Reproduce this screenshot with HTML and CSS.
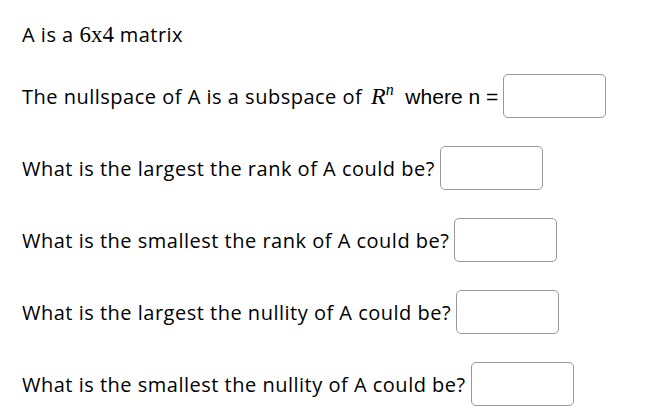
FILE: index.html
```html
<!DOCTYPE html>
<html>
<head>
<meta charset="utf-8">
<link rel="stylesheet" href="styles.css">
</head>
<body>
<div class="page">
  <div class="row first">A is a <span class="math">6x4</span> matrix</div>
  <div class="row"><span>The nullspace of A is a subspace of <span class="mvar">R<sup>n</sup></span> <span class="alt">where n =</span></span><span class="box"></span></div>
  <div class="row"><span>What is the largest the rank of A could be?</span><span class="box"></span></div>
  <div class="row"><span>What is the smallest the rank of A could be?</span><span class="box"></span></div>
  <div class="row"><span>What is the largest the nullity of A could be?</span><span class="box"></span></div>
  <div class="row"><span>What is the smallest the nullity of A could be?</span><span class="box"></span></div>
</div>
</body>
</html>
```
FILE: styles.css
```css
html, body {
  margin: 0;
  background: #fff;
}
.page {
  display: flex;
  flex-direction: column;
  gap: 28px;
  padding: 24px 22px;
  font-family: "Open Sans", sans-serif;
  font-size: 20px;
  letter-spacing: 0.5px;
  color: #000;
}
.row {
  display: flex;
  align-items: center;
  gap: 5px;
  white-space: nowrap;
}
.row.first {
  display: block;
  line-height: 22px;
}
.math {
  font-family: "Liberation Serif", serif;
  font-size: 23px;
  letter-spacing: 0;
}
.mvar {
  font-family: "Liberation Serif", serif;
  font-style: italic;
  font-size: 24px;
  letter-spacing: 0;
  margin-left: 3px;
  margin-right: 6px;
}
.mvar sup {
  font-size: 16px;
  vertical-align: 9px;
  line-height: 0;
}
.alt {
  font-family: "Liberation Sans", sans-serif;
  font-size: 21px;
  letter-spacing: 0;
}
.box {
  display: inline-block;
  width: 101px;
  height: 42px;
  border: 1px solid #999;
  border-radius: 5px;
  flex: none;
}
```
